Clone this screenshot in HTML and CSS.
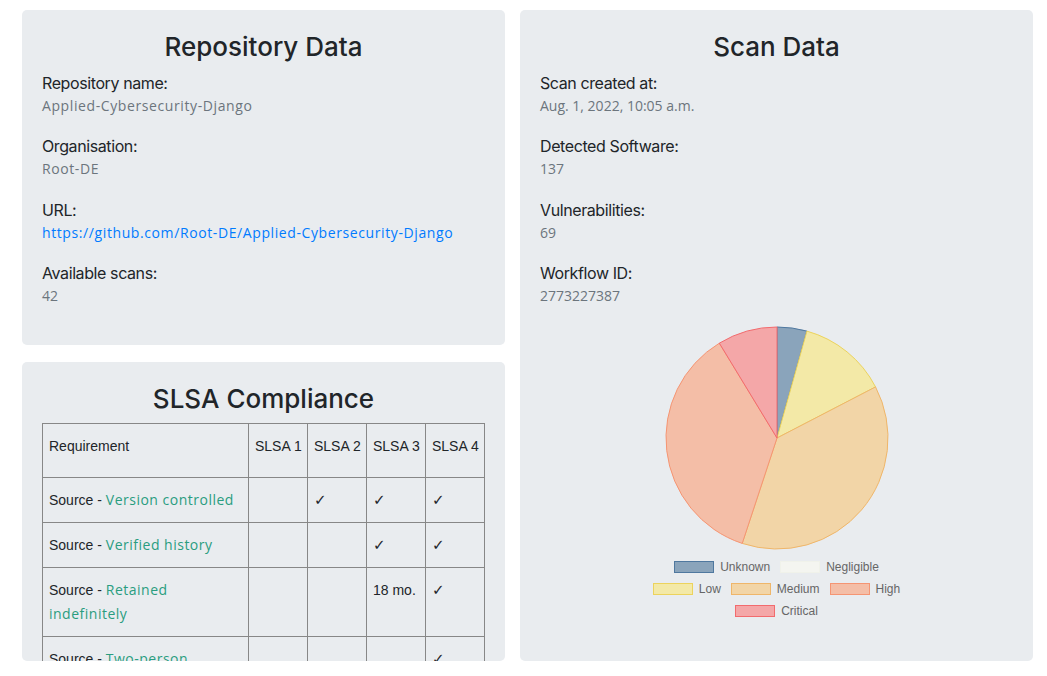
FILE: index.html
```html
<!DOCTYPE html>
<html lang="en">
<head>
<meta charset="utf-8">
<title>Scan overview</title>
<link rel="stylesheet" href="styles.css">
</head>
<body>
<main class="page">
  <div class="left-col">
    <section class="card">
      <h2 class="card-title">Repository Data</h2>
      <div class="field">
        <div class="label">Repository name:</div>
        <div class="value">Applied-Cybersecurity-Django</div>
      </div>
      <div class="field">
        <div class="label">Organisation:</div>
        <div class="value">Root-DE</div>
      </div>
      <div class="field">
        <div class="label">URL:</div>
        <div class="value"><a class="link" href="#">https://github.com/Root-DE/Applied-Cybersecurity-Django</a></div>
      </div>
      <div class="field">
        <div class="label">Available scans:</div>
        <div class="value num">42</div>
      </div>
    </section>
    <section class="card card-fill">
      <h2 class="card-title">SLSA Compliance</h2>
      <table class="slsa">
        <colgroup>
          <col class="c-req"><col class="c-lvl"><col class="c-lvl"><col class="c-lvl"><col class="c-lvl">
        </colgroup>
        <thead>
          <tr><th>Requirement</th><th>SLSA 1</th><th>SLSA 2</th><th>SLSA 3</th><th>SLSA 4</th></tr>
        </thead>
        <tbody>
          <tr><td>Source - <a class="req" href="#">Version controlled</a></td><td></td><td class="ok">✓</td><td class="ok">✓</td><td class="ok">✓</td></tr>
          <tr><td>Source - <a class="req" href="#">Verified history</a></td><td></td><td></td><td class="ok">✓</td><td class="ok">✓</td></tr>
          <tr><td>Source - <a class="req" href="#">Retained indefinitely</a></td><td></td><td></td><td>18 mo.</td><td class="ok">✓</td></tr>
          <tr><td>Source - <a class="req" href="#">Two-person reviewed</a></td><td></td><td></td><td></td><td class="ok">✓</td></tr>
          <tr><td>Build - <a class="req" href="#">Scripted build</a></td><td class="ok">✓</td><td class="ok">✓</td><td class="ok">✓</td><td class="ok">✓</td></tr>
          <tr><td>Build - <a class="req" href="#">Build service</a></td><td></td><td class="ok">✓</td><td class="ok">✓</td><td class="ok">✓</td></tr>
        </tbody>
      </table>
    </section>
  </div>

  <section class="card">
    <h2 class="card-title">Scan Data</h2>
    <div class="field">
      <div class="label">Scan created at:</div>
      <div class="value num">Aug. 1, 2022, 10:05 a.m.</div>
    </div>
    <div class="field">
      <div class="label">Detected Software:</div>
      <div class="value num">137</div>
    </div>
    <div class="field">
      <div class="label">Vulnerabilities:</div>
      <div class="value num">69</div>
    </div>
    <div class="field">
      <div class="label">Workflow ID:</div>
      <div class="value num">2773227387</div>
    </div>
    <div class="chart">
      <svg class="pie" width="226" height="226" viewBox="-113 -113 226 226" aria-label="Vulnerabilities by severity">
        <path class="s-unknown" d="M0 0 L0 -111 A111 111 0 0 1 29.95 -106.88 Z"/>
        <path class="s-low" d="M0 0 L29.95 -106.88 A111 111 0 0 1 98.56 -51.07 Z"/>
        <path class="s-medium" d="M0 0 L98.56 -51.07 A111 111 0 0 1 -34.78 105.41 Z"/>
        <path class="s-high" d="M0 0 L-34.78 105.41 A111 111 0 0 1 -57.67 -94.84 Z"/>
        <path class="s-critical" d="M0 0 L-57.67 -94.84 A111 111 0 0 1 0 -111 Z"/>
      </svg>
      <div class="legend">
        <div class="legend-row">
          <span class="item"><i class="box b-unknown"></i>Unknown</span>
          <span class="item"><i class="box b-negligible"></i>Negligible</span>
        </div>
        <div class="legend-row">
          <span class="item"><i class="box b-low"></i>Low</span>
          <span class="item"><i class="box b-medium"></i>Medium</span>
          <span class="item"><i class="box b-high"></i>High</span>
        </div>
        <div class="legend-row">
          <span class="item"><i class="box b-critical"></i>Critical</span>
        </div>
      </div>
    </div>
  </section>
</main>
</body>
</html>
```
FILE: styles.css
```css
* { box-sizing: border-box; }

html, body {
  margin: 0;
  background: #ffffff;
}

body {
  font-family: Inter, "Liberation Sans", sans-serif;
  color: #212529;
}

.page {
  display: grid;
  grid-template-columns: 483px 513px;
  column-gap: 15px;
  height: 661px;
  padding: 10px 0 0 22px;
}

.left-col {
  display: flex;
  flex-direction: column;
  gap: 17px;
  min-height: 0;
}

.card {
  background: #e9ecef;
  border-radius: 5px;
  padding: 20px 20px 21px;
  overflow: hidden;
  min-height: 0;
}

.card-fill {
  flex: 1;
}

.card-title {
  margin: 2px 0 9px;
  font-size: 26px;
  line-height: 30px;
  font-weight: 500;
  text-align: center;
  color: #212529;
}

.field {
  margin-bottom: 18.3px;
}

.label {
  font-size: 16px;
  line-height: 24px;
  letter-spacing: -0.4px;
}

.value {
  font-family: "Open Sans", sans-serif;
  font-size: 14px;
  line-height: 21px;
  letter-spacing: 0.6px;
  color: #6c757d;
}

.value.num {
  letter-spacing: 0;
}

.link {
  color: #007bff;
  text-decoration: none;
}

/* SLSA table */
.slsa {
  width: 442px;
  table-layout: fixed;
  border-collapse: collapse;
  font-family: "Liberation Sans", Arial, sans-serif;
  font-size: 14px;
  line-height: 24px;
  color: #212529;
}

.c-req { width: 206px; }
.c-lvl { width: 59px; }

.slsa th,
.slsa td {
  border: 1px solid #878787;
  padding: 10px 6px;
  text-align: left;
  vertical-align: top;
  font-weight: normal;
}

.slsa th {
  padding-bottom: 19px;
  border-bottom: none;
  white-space: nowrap;
}

.slsa th:first-child {
  border-right: none;
}

.slsa td.ok {
  font-family: "DejaVu Sans", sans-serif;
  font-size: 15px;
}

.req {
  font-family: "Open Sans", sans-serif;
  letter-spacing: 0.5px;
  color: #2a9d7f;
  text-decoration: none;
}

/* chart */
.chart {
  display: flex;
  flex-direction: column;
  align-items: center;
}

.pie {
  display: block;
  margin-top: 1px;
}

.pie path { stroke-width: 1; }
.s-unknown  { fill: #8aa4bb; stroke: #4f789f; }
.s-low      { fill: #f3e9a7; stroke: #ecd35c; }
.s-medium   { fill: #f2d5a7; stroke: #efb66a; }
.s-high     { fill: #f4bea7; stroke: #f59573; }
.s-critical { fill: #f4a7a8; stroke: #f26b6e; }

.legend {
  margin-top: 5px;
  font-family: "Liberation Sans", Arial, sans-serif;
  font-size: 12px;
  color: #666666;
}

.legend-row {
  display: flex;
  justify-content: center;
  gap: 10px;
  height: 22px;
  align-items: center;
}

.item {
  display: flex;
  align-items: center;
  gap: 6px;
}

.box {
  display: block;
  width: 40px;
  height: 12px;
  border: 1.5px solid;
}

.b-unknown    { background: #8aa4bb; border-color: #4f789f; }
.b-negligible { background: #f4f5f0; border-color: #f0f2ea; }
.b-low        { background: #f3e9a7; border-color: #ecd35c; }
.b-medium     { background: #f2d5a7; border-color: #efb66a; }
.b-high       { background: #f4bea7; border-color: #f59573; }
.b-critical   { background: #f4a7a8; border-color: #f26b6e; }
```
